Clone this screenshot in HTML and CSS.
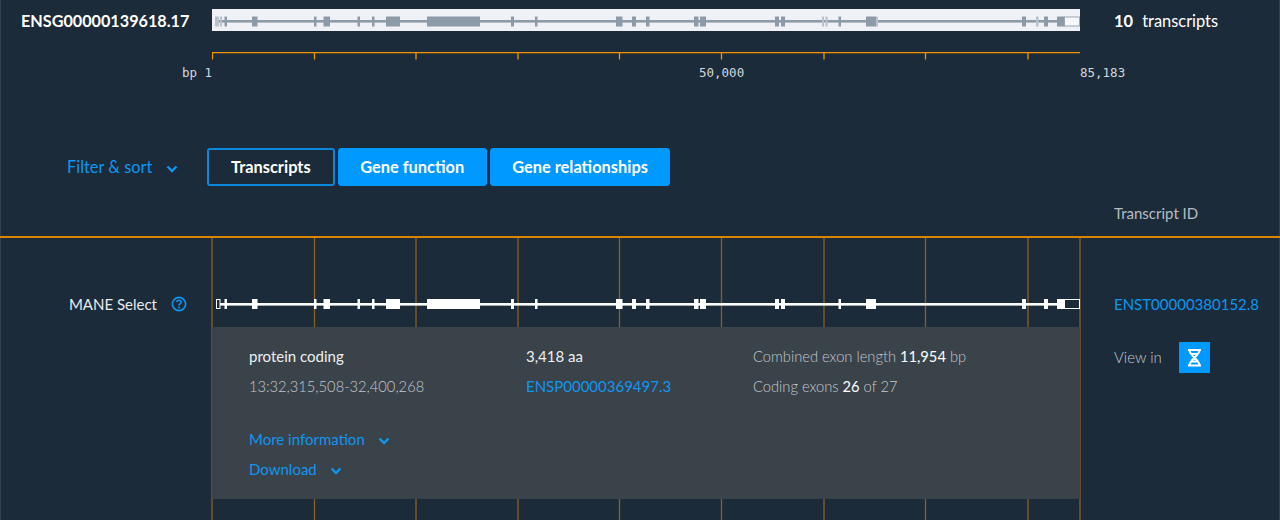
FILE: index.html
```html
<!DOCTYPE html>
<html lang="en">
<head>
  <meta charset="UTF-8" />
  <title>ENSG00000139618.17 transcripts</title>
  <link rel="stylesheet" href="styles.css">
</head>
<body>

  <svg class="defs" width="0" height="0">
    <defs>
      <g id="exons">
        <rect x="224.5" y="0" width="2.5" height="10" />
        <rect x="252" y="0" width="5.5" height="10" />
        <rect x="314" y="0" width="2.5" height="10" />
        <rect x="323.5" y="0" width="6.5" height="10" />
        <rect x="357.5" y="0" width="2.5" height="10" />
        <rect x="372" y="0" width="2.5" height="10" />
        <rect x="386" y="0" width="14" height="10" />
        <rect x="427" y="0" width="53" height="10" />
        <rect x="511" y="0" width="3" height="10" />
        <rect x="535" y="0" width="2.5" height="10" />
        <rect x="616" y="0" width="6.5" height="10" />
        <rect x="632" y="0" width="4" height="10" />
        <rect x="646" y="0" width="3.5" height="10" />
        <rect x="694" y="0" width="4.5" height="10" />
        <rect x="700" y="0" width="6" height="10" />
        <rect x="775" y="0" width="4" height="10" />
        <rect x="781" y="0" width="4" height="10" />
        <rect x="838.5" y="0" width="2.5" height="10" />
        <rect x="866" y="0" width="10" height="10" />
        <rect x="1022" y="0" width="4" height="10" />
        <rect x="1044" y="0" width="4" height="10" />
        <rect x="1057" y="0" width="7.5" height="10" />
      </g>
    </defs>
  </svg>

  <header class="overview">
    <div class="gene-id">ENSG00000139618.17</div>
    <div class="minimap">
      <svg width="868" height="22" viewBox="212 9 868 22">
        <rect class="map-bg" x="212" y="9" width="868" height="22" />
        <rect class="map-line" x="216" y="20" width="841" height="2.6" />
        <use class="map-exons" href="#exons" y="16.5" />
        <rect class="map-faint" x="215" y="16.5" width="4" height="10" />
        <rect class="map-faint" x="220" y="16.5" width="2" height="10" />
        <rect class="map-faint" x="822" y="16.5" width="2" height="10" />
        <rect class="map-faint" x="825.5" y="16.5" width="2" height="10" />
        <rect class="map-faint" x="876" y="16.5" width="2" height="10" />
        <rect class="map-faint" x="1036" y="16.5" width="2.5" height="10" />
        <rect class="map-open" x="1064.5" y="17" width="15" height="9" />
      </svg>
    </div>
    <div class="count"><strong>10</strong> transcripts</div>
  </header>

  <div class="ruler">
    <div class="ruler-track">
      <svg class="ticks" width="868" height="8" viewBox="212 52 868 8">
        <path d="M212 52.6H1080M212.5 52V59.5M314.5 52V59.5M416 52V59.5M518 52V59.5M619.5 52V59.5M721.5 52V59.5M824 52V59.5M925.5 52V59.5M1028 52V59.5" />
      </svg>
      <div class="ruler-labels">
        <span class="bp-start">bp 1</span>
        <span class="bp-mid">50,000</span>
        <span class="bp-end">85,183</span>
      </div>
    </div>
  </div>

  <nav class="toolbar">
    <a class="filter link">Filter &amp; sort
      <svg class="chevron" viewBox="0 0 12 8"><path d="M1.5 1.5L6 6l4.5-4.5" /></svg>
    </a>
    <div class="tabs">
      <button class="tab tab-active">Transcripts</button>
      <button class="tab">Gene function</button>
      <button class="tab">Gene relationships</button>
    </div>
  </nav>

  <div class="column-head">Transcript ID</div>

  <main class="transcripts">
    <svg class="gridlines" width="868" height="282" viewBox="212 238 868 282">
      <path d="M212 238V520M314.5 238V520M416 238V520M518 238V520M619.5 238V520M721.5 238V520M824 238V520M925.5 238V520M1028 238V520M1080 238V520" />
    </svg>

    <section class="row">
      <div class="row-label">
        MANE Select
        <svg class="help" viewBox="0 0 16 16">
          <circle cx="8" cy="8" r="6.6" />
          <path d="M5.9 6.3C5.9 5 6.9 4.3 8 4.3c1.2 0 2.1.8 2.1 1.9 0 1.6-2.1 1.6-2.1 3.2" />
          <circle class="help-dot" cx="8" cy="11.6" r="1" />
        </svg>
      </div>
      <svg class="track" width="868" height="90" viewBox="212 237 868 90">
        <rect class="track-line" x="216" y="303" width="850" height="2.6" />
        <use class="track-exons" href="#exons" y="299" />
        <rect class="track-open" x="216.5" y="299.5" width="3.5" height="9" />
        <rect class="track-open" x="1064.5" y="299.5" width="15" height="9" />
      </svg>
      <a class="row-id link">ENST00000380152.8</a>
    </section>

    <section class="details-row">
      <div class="details">
        <div class="facts">
          <div class="fact-col fact-first">
            <div class="light">protein coding</div>
            <div class="dim">13:32,315,508-32,400,268</div>
          </div>
          <div class="fact-col fact-second">
            <div class="light">3,418 aa</div>
            <a class="link">ENSP00000369497.3</a>
          </div>
          <div class="fact-col">
            <div class="dim">Combined exon length <b>11,954</b> bp</div>
            <div class="dim">Coding exons <b>26</b> of 27</div>
          </div>
        </div>
        <div class="expanders">
          <a class="link">More information
            <svg class="chevron" viewBox="0 0 12 8"><path d="M1.5 1.5L6 6l4.5-4.5" /></svg>
          </a>
          <a class="link">Download
            <svg class="chevron" viewBox="0 0 12 8"><path d="M1.5 1.5L6 6l4.5-4.5" /></svg>
          </a>
        </div>
      </div>
      <div class="view-in">
        <span class="view-label">View in</span>
        <span class="view-button">
          <svg viewBox="0 0 31 31">
            <path d="M9 8h13M9 23.5h13M10.5 8C10.5 14 20.5 17 20.5 23.5M20.5 8C20.5 14 10.5 17 10.5 23.5M12 12h7M12 19.5h7" />
          </svg>
        </span>
      </div>
    </section>
  </main>

</body>
</html>
```

FILE: styles.css
```css
/* transcripts view */

body {
  margin: 0;
  height: 520px;
  overflow: hidden;
  background-color: #1b2b3a;
  box-shadow: inset 1px 0 0 #33414e, inset -1px 0 0 #33414e;
  color: #fff;
  font-family: Lato, "Open Sans", sans-serif;
  font-size: 15px;
}

.defs {
  display: block;
  height: 0;
}

.link {
  color: #0f97f0;
  cursor: pointer;
}

.chevron {
  width: 12px;
  height: 8px;
  margin-left: 9px;
  fill: none;
  stroke: #0f97f0;
  stroke-width: 2.4;
}

/* top strip */

.overview {
  display: grid;
  grid-template-columns: 212px 868px 1fr;
  height: 40px;
  align-items: center;
}

.gene-id {
  padding-left: 21px;
  font-size: 16.2px;
  font-weight: 700;
}

.minimap {
  height: 22px;
}

.minimap svg {
  display: block;
}

.map-bg { fill: #eff1f6; }
.map-line { fill: #8d9aa8; }
.map-exons { fill: #8d9aa8; }
.map-faint { fill: #b9c1cb; }
.map-open { fill: #f7f8fa; stroke: #9aa5b1; }

.count {
  padding-left: 34px;
  font-size: 16.4px;
}

.count strong {
  margin-right: 5px;
}

/* ruler */

.ruler {
  padding: 12px 0 0 212px;
}

.ruler-track {
  width: 868px;
}

.ticks {
  display: block;
  fill: none;
  stroke: #f59300;
  stroke-width: 1.3;
}

.ruler-labels {
  position: relative;
  height: 19px;
  margin-top: 5px;
  font-family: "DejaVu Sans Mono", monospace;
  font-size: 12.5px;
  color: #d3d8dd;
}

.bp-start {
  position: absolute;
  right: 100%;
  white-space: nowrap;
}

.bp-mid {
  position: absolute;
  left: 487px;
}

.bp-end {
  position: absolute;
  left: 100%;
}

/* toolbar */

.toolbar {
  display: flex;
  align-items: center;
  margin-top: 64px;
}

.filter {
  width: 207px;
  padding: 0 0 2px 67px;
  box-sizing: border-box;
  font-size: 16.4px;
}

.tabs {
  display: flex;
  gap: 3px;
}

.tab {
  height: 38px;
  padding: 0 21.5px 2px;
  border: 1px solid #0099ff;
  border-radius: 3px;
  background-color: #0099ff;
  color: #fff;
  font-family: Lato, sans-serif;
  font-size: 16.4px;
  font-weight: 700;
}

.tab-active {
  padding: 0 22px 2px;
  border: 2px solid #0a88dc;
  background-color: #1b2b3a;
}

.column-head {
  height: 18px;
  padding: 18px 0 14px 1114px;
  color: #b6bdc4;
  line-height: 18px;
}

/* transcript rows */

.transcripts {
  position: relative;
  height: 282px;
  border-top: 2px solid #d98600;
}

.gridlines {
  position: absolute;
  left: 212px;
  top: 0;
  fill: none;
  stroke: #8f5f20;
  stroke-width: 1.3;
  overflow: visible;
}

.row {
  display: grid;
  grid-template-columns: 212px 868px 1fr;
  height: 89px;
  align-items: center;
}

.row-label {
  display: flex;
  align-items: center;
  justify-content: flex-end;
  gap: 14px;
  padding: 43px 25px 0 0;
  color: #e8eaec;
}

.help {
  width: 16px;
  height: 16px;
  fill: none;
  stroke: #0f97f0;
  stroke-width: 1.6;
}

.help-dot {
  fill: #0f97f0;
  stroke: none;
}

.track {
  position: relative;
  display: block;
  margin-top: -1px;
}

.track-line { fill: #fff; }
.track-exons { fill: #fff; }
.track-open { fill: #1b2b3a; stroke: #fff; }

.row-id {
  padding: 43px 0 0 34px;
  white-space: nowrap;
}

.details-row {
  display: grid;
  grid-template-columns: 212px 868px 1fr;
}

.details {
  grid-column: 2;
  position: relative;
  height: 172px;
  box-sizing: border-box;
  padding: 14px 37px 0;
  background-color: #3a424a;
}

.facts {
  display: flex;
  line-height: 30px;
}

.fact-first {
  width: 277px;
}

.fact-second {
  width: 227px;
}

.light {
  color: #eef0f1;
}

.dim {
  font-size: 14.7px;
  font-weight: 300;
  color: #c4c8cc;
}

.dim b {
  font-weight: 400;
  color: #fff;
}

.expanders {
  display: flex;
  flex-direction: column;
  align-items: flex-start;
  margin-top: 23px;
  line-height: 30px;
}

.view-in {
  display: flex;
  align-items: center;
  gap: 17px;
  height: 31px;
  padding: 15px 0 0 34px;
  font-weight: 300;
  color: #c4c8cc;
}

.view-label {
  padding-bottom: 2px;
}

.view-button {
  display: block;
  width: 31px;
  height: 31px;
  background-color: #0099ff;
}

.view-button svg {
  display: block;
  fill: none;
  stroke: #fff;
  stroke-width: 2;
}
```
